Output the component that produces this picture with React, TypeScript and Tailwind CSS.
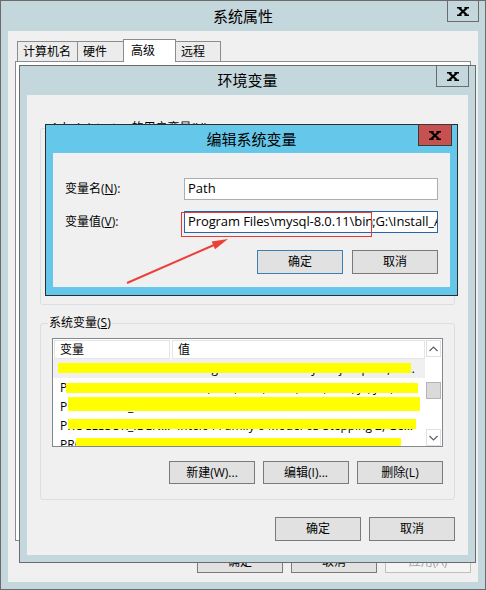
import React from "react";

const FONT = "font-['Open_Sans','Noto_Sans_CJK_SC',sans-serif]";

function XGlyph() {
  return (
    <svg width="12" height="9" viewBox="0 0 12 9">
      <path d="M2.2 1 L9.8 8 M9.8 1 L2.2 8" stroke="#000" strokeWidth="2.2" fill="none" />
      <path d="M0 0.8 H4.6 M7.4 0.8 H12 M0 8.2 H4.6 M7.4 8.2 H12" stroke="#000" strokeWidth="1.6" />
    </svg>
  );
}

function CloseBtn({ red, cls }: { red?: boolean; cls: string }) {
  return (
    <div
      className={`absolute flex items-center justify-center border ${
        red ? "bg-[#c75050] border-[#3a3a3a]" : "border-[#6b6b6b]"
      } ${cls}`}
    >
      <XGlyph />
    </div>
  );
}

function Btn({
  children,
  cls = "border-[#7a7a7a] bg-[#e1e1e1]",
  h = "h-[24px]",
}: {
  children: React.ReactNode;
  cls?: string;
  h?: string;
}) {
  return (
    <div className={`w-[86px] ${h} shrink-0 flex items-center justify-center border text-[12px] ${cls}`}>
      {children}
    </div>
  );
}

function Chevron({ up }: { up?: boolean }) {
  return (
    <svg width="9" height="6" viewBox="0 0 9 6">
      <path
        d={up ? "M0.5 5 L4.5 1 L8.5 5" : "M0.5 1 L4.5 5 L8.5 1"}
        stroke="#606060"
        strokeWidth="1.2"
        fill="none"
      />
    </svg>
  );
}

type Row = {
  n: string;
  v: string;
  bar: { l: number; w: number; t: number; h: number };
  bg?: boolean;
};

const rows: Row[] = [
  {
    n: "Path",
    v: "C:\\ProgramData\\Oracle\\Java\\javapath;C:\\Program Files (x86)\\Intel\\iCLS Client\\;C:\\Program Files",
    bar: { l: 5, w: 353, t: 4, h: 10 },
    bg: true,
  },
  {
    n: "PATHEXT",
    v: ".COM;.EXE;.BAT;.CMD;.VBS;.VBE;.JS;.JSE;.WSF;.WSH;.MSC",
    bar: { l: 13, w: 352, t: 5, h: 10 },
  },
  {
    n: "PROCESSOR_ARCHITECTURE",
    v: "AMD64",
    bar: { l: 15, w: 352, t: 0, h: 14 },
  },
  {
    n: "PROCESSOR_IDENTIFIER",
    v: "Intel64 Family 6 Model 63 Stepping 2, GenuineIntel",
    bar: { l: 15, w: 348, t: 3, h: 10 },
  },
  {
    n: "PROCESSOR_LEVEL",
    v: "6",
    bar: { l: 23, w: 325, t: 3, h: 12 },
  },
];

function SysList() {
  return (
    <div className="h-[109px] border border-[#828790] bg-white flex overflow-hidden">
      <div className="flex-1 flex flex-col overflow-hidden">
        <div className="flex h-[20px] shrink-0 gap-[2px] pl-[1px] pt-[1px]">
          <div className="w-[116px] h-[19px] border border-[#e5e5e5] flex items-center pl-[5px] text-[12px]">
            变量
          </div>
          <div className="flex-1 h-[19px] border border-[#e5e5e5] flex items-center pl-[5px] text-[12px]">
            值
          </div>
        </div>
        {rows.map((r, i) => (
          <div
            key={i}
            className={`relative h-[19px] shrink-0 flex items-center text-[12px] whitespace-nowrap ${
              r.bg ? "bg-[#f0f0f0]" : ""
            }`}
          >
            <div className="w-[124px] shrink-0 pl-[7px] overflow-hidden text-ellipsis">{r.n}</div>
            <div className="w-[238px] shrink-0 overflow-hidden text-ellipsis">{r.v}</div>
            <div
              className="absolute bg-[#ffff00]"
              style={{ left: r.bar.l, width: r.bar.w, top: r.bar.t, height: r.bar.h }}
            />
          </div>
        ))}
      </div>
      <div className="w-[17px] shrink-0 flex flex-col pt-[1px] px-[1px]">
        <div className="h-[17px] shrink-0 border border-[#dfdfdf] flex items-center justify-center">
          <Chevron up />
        </div>
        <div className="h-[17px] shrink-0 mt-[25px] bg-[#dadada] border border-[#b4b4b4]" />
        <div className="flex-1" />
        <div className="h-[17px] shrink-0 border border-[#dfdfdf] flex items-center justify-center">
          <Chevron />
        </div>
      </div>
    </div>
  );
}

function Tab({ children, cls }: { children: React.ReactNode; cls: string }) {
  return (
    <div className={`border border-b-0 border-[#8c8c8c] flex items-center pl-[5px] text-[12px] ${cls}`}>
      {children}
    </div>
  );
}

export default function App() {
  return (
    <div className={`relative w-[486px] h-[590px] overflow-hidden text-black ${FONT}`}>
      {/* 系统属性 */}
      <div className="relative w-full h-full border border-[#6b6b6b] bg-[#c4d7dc] flex flex-col">
        <div className="h-[30px] shrink-0 flex items-center justify-center text-[15px]">系统属性</div>
        <CloseBtn cls="right-[6px] top-[-1px] w-[32px] h-[22px]" />
        <div className="flex-1 mx-[7px] mb-[7px] bg-[#f0f0f0] flex flex-col">
          <div className="h-[30px] shrink-0 flex items-end pl-[9px]">
            <Tab cls="w-[61px] h-[20px] bg-[#ececec]">计算机名</Tab>
            <Tab cls="w-[47px] h-[20px] -ml-[1px] bg-[#ececec]">硬件</Tab>
            <Tab cls="relative z-10 w-[53px] h-[23px] -ml-[1px] -mb-[1px] bg-white pl-[7px]">高级</Tab>
            <Tab cls="w-[46px] h-[20px] -ml-[1px] bg-[#ececec] pl-[3px]">远程</Tab>
          </div>
          <div className="mx-[7px] h-[480px] shrink-0 border border-[#898c95] bg-white" />
          <div className="flex justify-end gap-[8px] pr-[7px] mt-[9px]">
            <Btn h="h-[23px]">确定</Btn>
            <Btn h="h-[23px]">取消</Btn>
            <Btn h="h-[23px]" cls="border-[#bfbfbf] bg-[#f4f4f4] text-[#a0a0a0]">
              应用(A)
            </Btn>
          </div>
        </div>
      </div>

      {/* 环境变量 */}
      <div className="absolute left-[19px] top-[65px] w-[457px] h-[498px] border border-[#6b6b6b] bg-[#c4d7dc] flex flex-col">
        <div className="h-[29px] shrink-0 flex items-center justify-center text-[15px]">环境变量</div>
        <CloseBtn cls="right-[6px] top-[-1px] w-[33px] h-[22px]" />
        <div className="flex-1 mx-[7px] mb-[7px] bg-[#f0f0f0] flex flex-col pt-[33px] px-[13px]">
          <div className="relative h-[177px] shrink-0 border border-[#d5dfe5] rounded-[3px]">
            <div className="absolute left-[9px] top-[-9px] px-[1px] bg-[#f0f0f0] text-[12px] leading-[16px]">
              Administrator 的用户变量(<span className="underline">U</span>)
            </div>
          </div>
          <div className="relative mt-[18px] shrink-0 border border-[#d5dfe5] rounded-[3px] pt-[14px] px-[11px] pb-[15px]">
            <div className="absolute left-[7px] top-[-9px] px-[1px] bg-[#f0f0f0] text-[12px] leading-[16px]">
              系统变量(<span className="underline">S</span>)
            </div>
            <SysList />
            <div className="flex justify-end gap-[8px] mt-[14px]">
              <Btn h="h-[23px]">新建(W)...</Btn>
              <Btn h="h-[23px]">编辑(I)...</Btn>
              <Btn h="h-[23px]">删除(L)</Btn>
            </div>
          </div>
          <div className="flex justify-end gap-[8px] mt-[17px]">
            <Btn>确定</Btn>
            <Btn>取消</Btn>
          </div>
        </div>
      </div>

      {/* 编辑系统变量 */}
      <div className="absolute left-[45px] top-[124px] w-[413px] h-[172px] border border-[#2d2d2d] bg-[#65c8ea] flex flex-col">
        <div className="h-[28px] shrink-0 flex items-center justify-center text-[15px]">编辑系统变量</div>
        <CloseBtn red cls="right-[5px] top-[-1px] w-[34px] h-[22px]" />
        <div className="flex-1 mx-[7px] mb-[8px] bg-[#f0f0f0] flex flex-col px-[12px] pt-[25px]">
          <div className="flex items-center h-[22px]">
            <div className="w-[119px] shrink-0 text-[12px]">
              变量名(<span className="underline">N</span>):
            </div>
            <div className="w-[254px] h-[22px] border border-[#abadb3] bg-white flex items-center pl-[3px] text-[13px]">
              Path
            </div>
          </div>
          <div className="flex items-center h-[22px] mt-[11px]">
            <div className="w-[119px] shrink-0 text-[12px]">
              变量值(<span className="underline">V</span>):
            </div>
            <div className="w-[254px] h-[22px] border border-[#2a64a8] bg-white flex items-center pl-[3px] text-[13px] tracking-[-0.1px] whitespace-nowrap overflow-hidden">
              <span>Program Files\mysql-8.0.11\bin</span>
              <span className="inline-block w-[1px] h-[15px] bg-black -mr-[1px]" />
              <span>;G:\Install_Apps\Java\bin</span>
            </div>
          </div>
          <div className="flex justify-end gap-[9px] mt-[17px]">
            <Btn cls="border-[#3c7fb1] bg-[#e1e1e1]">确定</Btn>
            <Btn>取消</Btn>
          </div>
        </div>
      </div>

      {/* 标注 */}
      <div className="absolute left-[181px] top-[212px] w-[191px] h-[25px] border border-[#e23b36]" />
      <svg className="absolute left-0 top-0 pointer-events-none" width="486" height="590" viewBox="0 0 486 590">
        <line x1="127" y1="283" x2="214" y2="245" stroke="#ea4238" strokeWidth="2" />
        <polygon points="228,239 215,249.2 211.7,241.6" fill="#ea4238" />
      </svg>
    </div>
  );
}
